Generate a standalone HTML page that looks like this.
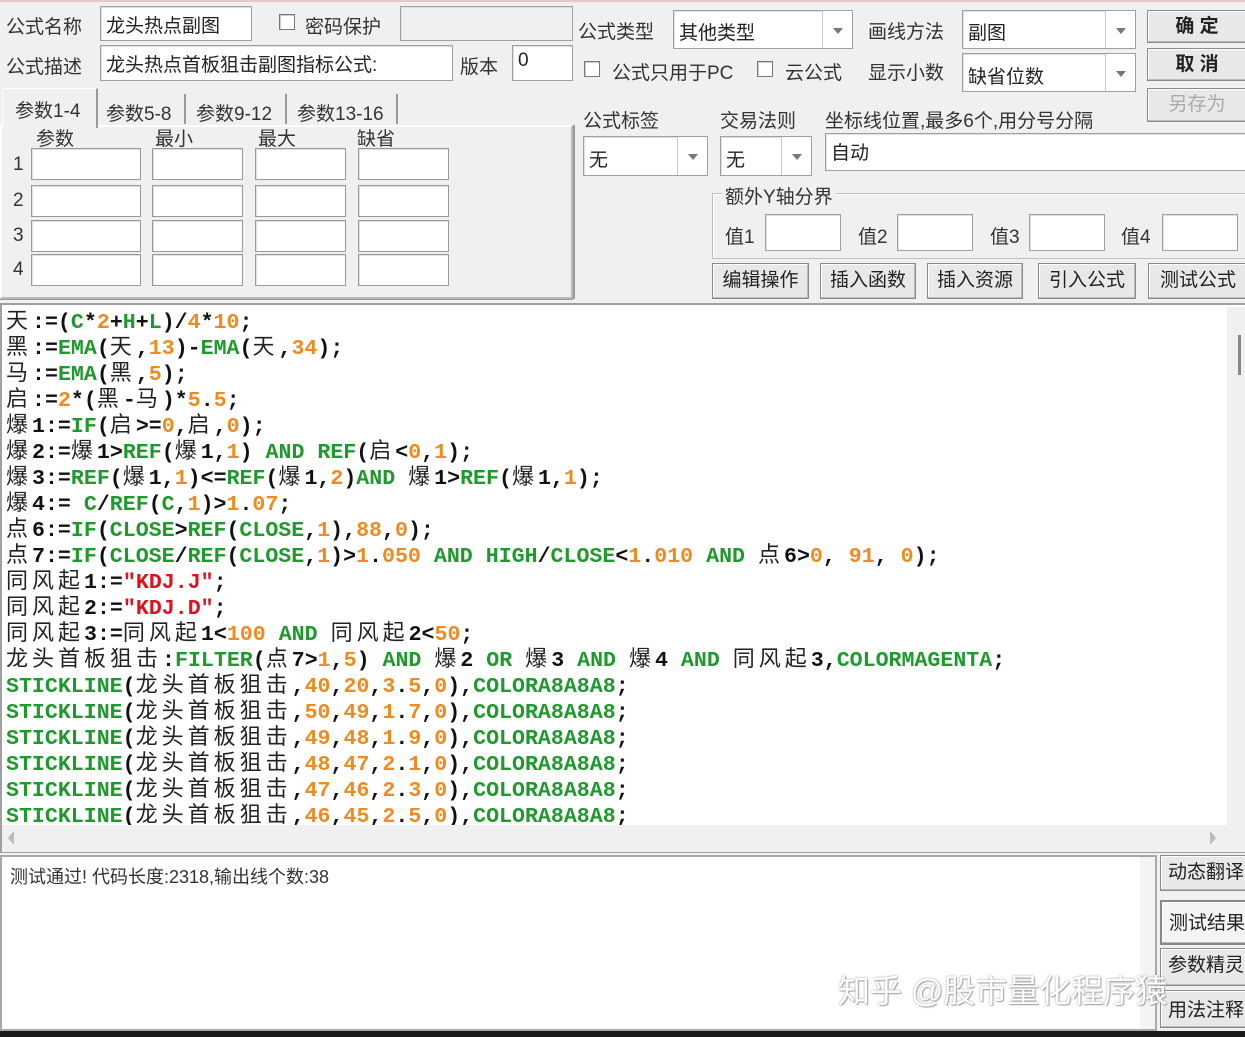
<!DOCTYPE html>
<html><head><meta charset="utf-8"><style>
*{box-sizing:border-box;margin:0;padding:0}
body{width:1245px;height:1037px;background:#f0f0f0;position:relative;overflow:hidden;font-family:"Liberation Sans","Noto Sans CJK SC",sans-serif;font-size:19px;color:#222}
.a{position:absolute}
.lb{position:absolute;white-space:nowrap;font-size:19px;color:#333}
.in{position:absolute;background:#fff;border:1px solid #a0a0a0;box-shadow:inset 1px 1px 0 #e0e0e0;font-size:19px;padding:4px 5px;white-space:nowrap}
.sel .ar{position:absolute;right:0;top:0;bottom:0;width:30px;border-left:1px solid #c8c8c8;background:#fff}
.sel .ar:after{content:"";position:absolute;left:10px;top:50%;margin-top:-2px;border-left:5px solid transparent;border-right:5px solid transparent;border-top:6px solid #777}
.cb{position:absolute;width:16px;height:16px;border:1px solid #777;background:#fff;box-shadow:inset 1px 1px 0 #ccc}
.bt{position:absolute;background:#e8e8e8;border:1px solid #8a8a8a;box-shadow:inset -1px -1px 0 #bbb,inset 1px 1px 0 #fff;text-align:center;font-size:19px;color:#222;white-space:nowrap}
.code{position:absolute;left:3px;top:310px;width:1222px;height:515px;background:#fff;overflow:hidden;font-family:"Liberation Mono",monospace;font-weight:bold;font-size:21.6px;line-height:26px;white-space:pre;color:#111;padding-left:3px}
.code div{height:26px;line-height:26px;overflow:visible}
.g{color:#1e9a2c}.o{color:#f08a1e}.r{color:#e0101c}
.k{font-family:"Noto Sans CJK SC",sans-serif;font-weight:normal;font-size:22px;letter-spacing:4px;color:#222;line-height:0}
</style></head><body>
<div class="a" style="left:0;top:0;width:1245px;height:2px;background:#e9c7c7"></div>
<div class="lb" style="left:6px;top:12px">公式名称</div>
<div class="in" style="left:100px;top:6px;width:152px;height:35px">龙头热点副图</div>
<div class="cb" style="left:279px;top:14px"></div>
<div class="lb" style="left:305px;top:12px">密码保护</div>
<div class="in" style="left:400px;top:6px;width:173px;height:35px;background:#f0f0f0"></div>
<div class="lb" style="left:6px;top:52px">公式描述</div>
<div class="in" style="left:100px;top:45px;width:353px;height:36px">龙头热点首板狙击副图指标公式:</div>
<div class="lb" style="left:460px;top:52px">版本</div>
<div class="in" style="left:512px;top:45px;width:61px;height:36px">0</div>
<div class="a" style="left:0;top:125px;width:573px;height:174px;border:2px solid #b8b8b8;border-top-color:#fff;border-left-color:#fff;box-shadow:1px 0 0 #999,0 1px 0 #999"></div>
<div class="a" style="left:2px;top:88px;width:96px;height:40px;background:#f0f0f0;border-right:2px solid #999;border-top:1px solid #fff;border-left:1px solid #fff"></div>
<div class="lb" style="left:15px;top:96px">参数1-4</div>
<div class="lb" style="left:106px;top:99px">参数5-8</div>
<div class="a" style="left:184px;top:94px;width:2px;height:30px;background:#999"></div>
<div class="lb" style="left:196px;top:99px">参数9-12</div>
<div class="a" style="left:285px;top:94px;width:2px;height:30px;background:#999"></div>
<div class="lb" style="left:297px;top:99px">参数13-16</div>
<div class="a" style="left:396px;top:94px;width:2px;height:30px;background:#999"></div>
<div class="lb" style="left:36px;top:124px">参数</div>
<div class="lb" style="left:155px;top:124px">最小</div>
<div class="lb" style="left:258px;top:124px">最大</div>
<div class="lb" style="left:357px;top:124px">缺省</div>
<div class="lb" style="left:13px;top:154px">1</div>
<div class="lb" style="left:13px;top:190px">2</div>
<div class="lb" style="left:13px;top:225px">3</div>
<div class="lb" style="left:13px;top:259px">4</div>
<div id="grid"></div>
<div class="lb" style="left:578px;top:17px">公式类型</div>
<div class="in sel" style="left:673px;top:10px;width:180px;height:39px;padding-top:7px">其他类型<span class="ar"></span></div>
<div class="lb" style="left:868px;top:17px">画线方法</div>
<div class="in sel" style="left:962px;top:10px;width:174px;height:39px;padding-top:7px">副图<span class="ar"></span></div>
<div class="cb" style="left:584px;top:61px"></div>
<div class="lb" style="left:612px;top:58px">公式只用于PC</div>
<div class="cb" style="left:757px;top:61px"></div>
<div class="lb" style="left:785px;top:58px">云公式</div>
<div class="lb" style="left:868px;top:58px">显示小数</div>
<div class="in sel" style="left:962px;top:53px;width:174px;height:39px;padding-top:8px">缺省位数<span class="ar"></span></div>
<div class="bt" style="left:1147px;top:10px;width:100px;height:33px;line-height:31px;font-weight:bold">确 定</div>
<div class="bt" style="left:1147px;top:48px;width:100px;height:33px;line-height:31px;font-weight:bold">取 消</div>
<div class="bt" style="left:1147px;top:88px;width:100px;height:34px;line-height:32px;color:#aaa">另存为</div>
<div class="a" style="left:573px;top:125px;width:2px;height:174px;background:#999"></div>
<div class="lb" style="left:583px;top:106px">公式标签</div>
<div class="lb" style="left:720px;top:106px">交易法则</div>
<div class="lb" style="left:825px;top:106px">坐标线位置,最多6个,用分号分隔</div>
<div class="in sel" style="left:583px;top:136px;width:125px;height:40px;padding-top:8px">无<span class="ar"></span></div>
<div class="in sel" style="left:720px;top:136px;width:92px;height:40px;padding-top:8px">无<span class="ar"></span></div>
<div class="in" style="left:825px;top:133px;width:425px;height:38px">自动</div>
<div class="a" style="left:712px;top:193px;width:540px;height:66px;border:1px solid #c0c0c0;box-shadow:inset 1px 1px 0 #fff"></div>
<div class="lb" style="left:722px;top:182px;background:#f0f0f0;padding:0 3px">额外Y轴分界</div>
<div class="lb" style="left:725px;top:222px">值1</div>
<div class="in" style="left:765px;top:214px;width:76px;height:37px"></div>
<div class="lb" style="left:858px;top:222px">值2</div>
<div class="in" style="left:897px;top:214px;width:76px;height:37px"></div>
<div class="lb" style="left:990px;top:222px">值3</div>
<div class="in" style="left:1029px;top:214px;width:76px;height:37px"></div>
<div class="lb" style="left:1121px;top:222px">值4</div>
<div class="in" style="left:1162px;top:214px;width:76px;height:37px"></div>
<div class="bt" style="left:712px;top:263px;width:97px;height:36px;line-height:34px">编辑操作</div>
<div class="bt" style="left:820px;top:263px;width:96px;height:36px;line-height:34px">插入函数</div>
<div class="bt" style="left:927px;top:263px;width:96px;height:36px;line-height:34px">插入资源</div>
<div class="bt" style="left:1038px;top:263px;width:98px;height:36px;line-height:34px">引入公式</div>
<div class="bt" style="left:1148px;top:263px;width:100px;height:36px;line-height:34px">测试公式</div>
<div class="a" style="left:0;top:303px;width:1245px;height:550px;border:2px solid #a0a0a0;border-right:none;background:#fff"></div>
<div class="code"><div><span class="k">天</span>:=(<span class="g">C</span>*<span class="o">2</span>+<span class="g">H</span>+<span class="g">L</span>)/<span class="o">4</span>*<span class="o">10</span>;</div><div><span class="k">黑</span>:=<span class="g">EMA</span>(<span class="k">天</span>,<span class="o">13</span>)-<span class="g">EMA</span>(<span class="k">天</span>,<span class="o">34</span>);</div><div><span class="k">马</span>:=<span class="g">EMA</span>(<span class="k">黑</span>,<span class="o">5</span>);</div><div><span class="k">启</span>:=<span class="o">2</span>*(<span class="k">黑</span>-<span class="k">马</span>)*<span class="o">5</span>.<span class="o">5</span>;</div><div><span class="k">爆</span>1:=<span class="g">IF</span>(<span class="k">启</span>&gt;=<span class="o">0</span>,<span class="k">启</span>,<span class="o">0</span>);</div><div><span class="k">爆</span>2:=<span class="k">爆</span>1&gt;<span class="g">REF</span>(<span class="k">爆</span>1,<span class="o">1</span>) <span class="g">AND</span> <span class="g">REF</span>(<span class="k">启</span>&lt;<span class="o">0</span>,<span class="o">1</span>);</div><div><span class="k">爆</span>3:=<span class="g">REF</span>(<span class="k">爆</span>1,<span class="o">1</span>)&lt;=<span class="g">REF</span>(<span class="k">爆</span>1,<span class="o">2</span>)<span class="g">AND</span> <span class="k">爆</span>1&gt;<span class="g">REF</span>(<span class="k">爆</span>1,<span class="o">1</span>);</div><div><span class="k">爆</span>4:= <span class="g">C</span>/<span class="g">REF</span>(<span class="g">C</span>,<span class="o">1</span>)&gt;<span class="o">1</span>.<span class="o">07</span>;</div><div><span class="k">点</span>6:=<span class="g">IF</span>(<span class="g">CLOSE</span>&gt;<span class="g">REF</span>(<span class="g">CLOSE</span>,<span class="o">1</span>),<span class="o">88</span>,<span class="o">0</span>);</div><div><span class="k">点</span>7:=<span class="g">IF</span>(<span class="g">CLOSE</span>/<span class="g">REF</span>(<span class="g">CLOSE</span>,<span class="o">1</span>)&gt;<span class="o">1</span>.<span class="o">050</span> <span class="g">AND</span> <span class="g">HIGH</span>/<span class="g">CLOSE</span>&lt;<span class="o">1</span>.<span class="o">010</span> <span class="g">AND</span> <span class="k">点</span>6&gt;<span class="o">0</span>, <span class="o">91</span>, <span class="o">0</span>);</div><div><span class="k">同风起</span>1:=<span class="r">"KDJ.J"</span>;</div><div><span class="k">同风起</span>2:=<span class="r">"KDJ.D"</span>;</div><div><span class="k">同风起</span>3:=<span class="k">同风起</span>1&lt;<span class="o">100</span> <span class="g">AND</span> <span class="k">同风起</span>2&lt;<span class="o">50</span>;</div><div><span class="k">龙头首板狙击</span>:<span class="g">FILTER</span>(<span class="k">点</span>7&gt;<span class="o">1</span>,<span class="o">5</span>) <span class="g">AND</span> <span class="k">爆</span>2 <span class="g">OR</span> <span class="k">爆</span>3 <span class="g">AND</span> <span class="k">爆</span>4 <span class="g">AND</span> <span class="k">同风起</span>3,<span class="g">COLORMAGENTA</span>;</div><div><span class="g">STICKLINE</span>(<span class="k">龙头首板狙击</span>,<span class="o">40</span>,<span class="o">20</span>,<span class="o">3</span>.<span class="o">5</span>,<span class="o">0</span>),<span class="g">COLORA8A8A8</span>;</div><div><span class="g">STICKLINE</span>(<span class="k">龙头首板狙击</span>,<span class="o">50</span>,<span class="o">49</span>,<span class="o">1</span>.<span class="o">7</span>,<span class="o">0</span>),<span class="g">COLORA8A8A8</span>;</div><div><span class="g">STICKLINE</span>(<span class="k">龙头首板狙击</span>,<span class="o">49</span>,<span class="o">48</span>,<span class="o">1</span>.<span class="o">9</span>,<span class="o">0</span>),<span class="g">COLORA8A8A8</span>;</div><div><span class="g">STICKLINE</span>(<span class="k">龙头首板狙击</span>,<span class="o">48</span>,<span class="o">47</span>,<span class="o">2</span>.<span class="o">1</span>,<span class="o">0</span>),<span class="g">COLORA8A8A8</span>;</div><div><span class="g">STICKLINE</span>(<span class="k">龙头首板狙击</span>,<span class="o">47</span>,<span class="o">46</span>,<span class="o">2</span>.<span class="o">3</span>,<span class="o">0</span>),<span class="g">COLORA8A8A8</span>;</div><div><span class="g">STICKLINE</span>(<span class="k">龙头首板狙击</span>,<span class="o">46</span>,<span class="o">45</span>,<span class="o">2</span>.<span class="o">5</span>,<span class="o">0</span>),<span class="g">COLORA8A8A8</span>;</div></div>
<div class="a" style="left:1227px;top:307px;width:18px;height:518px;background:#f0f0f0"></div>
<div class="a" style="left:1238px;top:335px;width:3px;height:40px;background:#888"></div>
<div class="a" style="left:2px;top:825px;width:1243px;height:27px;background:#f0f0f0"></div>
<div class="a" style="left:8px;top:831px;border-top:7px solid transparent;border-bottom:7px solid transparent;border-right:6px solid #bbb"></div>
<div class="a" style="left:1210px;top:831px;border-top:7px solid transparent;border-bottom:7px solid transparent;border-left:6px solid #bbb"></div>
<div class="a" style="left:0;top:855px;width:1157px;height:176px;border:2px solid #a8a8a8;background:#fff"></div>
<div class="a" style="left:1140px;top:857px;width:15px;height:172px;background:#f4f4f4"></div>
<div class="lb" style="left:10px;top:863px;font-size:18px;color:#333">测试通过! 代码长度:2318,输出线个数:38</div>
<div class="bt" style="left:1160px;top:855px;width:90px;height:36px;line-height:34px;text-align:left;padding-left:7px">动态翻译</div>
<div class="bt" style="left:1160px;top:900px;width:90px;height:45px;line-height:43px;text-align:left;padding-left:7px;background:#f4f4f4;border:2px solid #888">测试结果</div>
<div class="bt" style="left:1160px;top:948px;width:90px;height:38px;line-height:34px;text-align:left;padding-left:7px">参数精灵</div>
<div class="bt" style="left:1160px;top:990px;width:90px;height:38px;line-height:40px;text-align:left;padding-left:7px">用法注释</div>
<div class="lb" style="left:838px;top:966px;font-size:32px;color:#fff;text-shadow:0 0 2px #999,1px 1px 1px #aaa">知乎 @股市量化程序猿</div>
<div class="a" style="left:0;top:1031px;width:1245px;height:6px;background:#1a1a1a"></div>
<script>
var g=document.getElementById('grid'),xs=[[31,110],[152,91],[255,91],[358,91]],ys=[148,185,220,254];
ys.forEach(function(y){xs.forEach(function(x){var d=document.createElement('div');d.className='in';d.style.cssText='left:'+x[0]+'px;top:'+y+'px;width:'+x[1]+'px;height:32px;border-color:#999';g.appendChild(d);});});
</script>
</body></html>
